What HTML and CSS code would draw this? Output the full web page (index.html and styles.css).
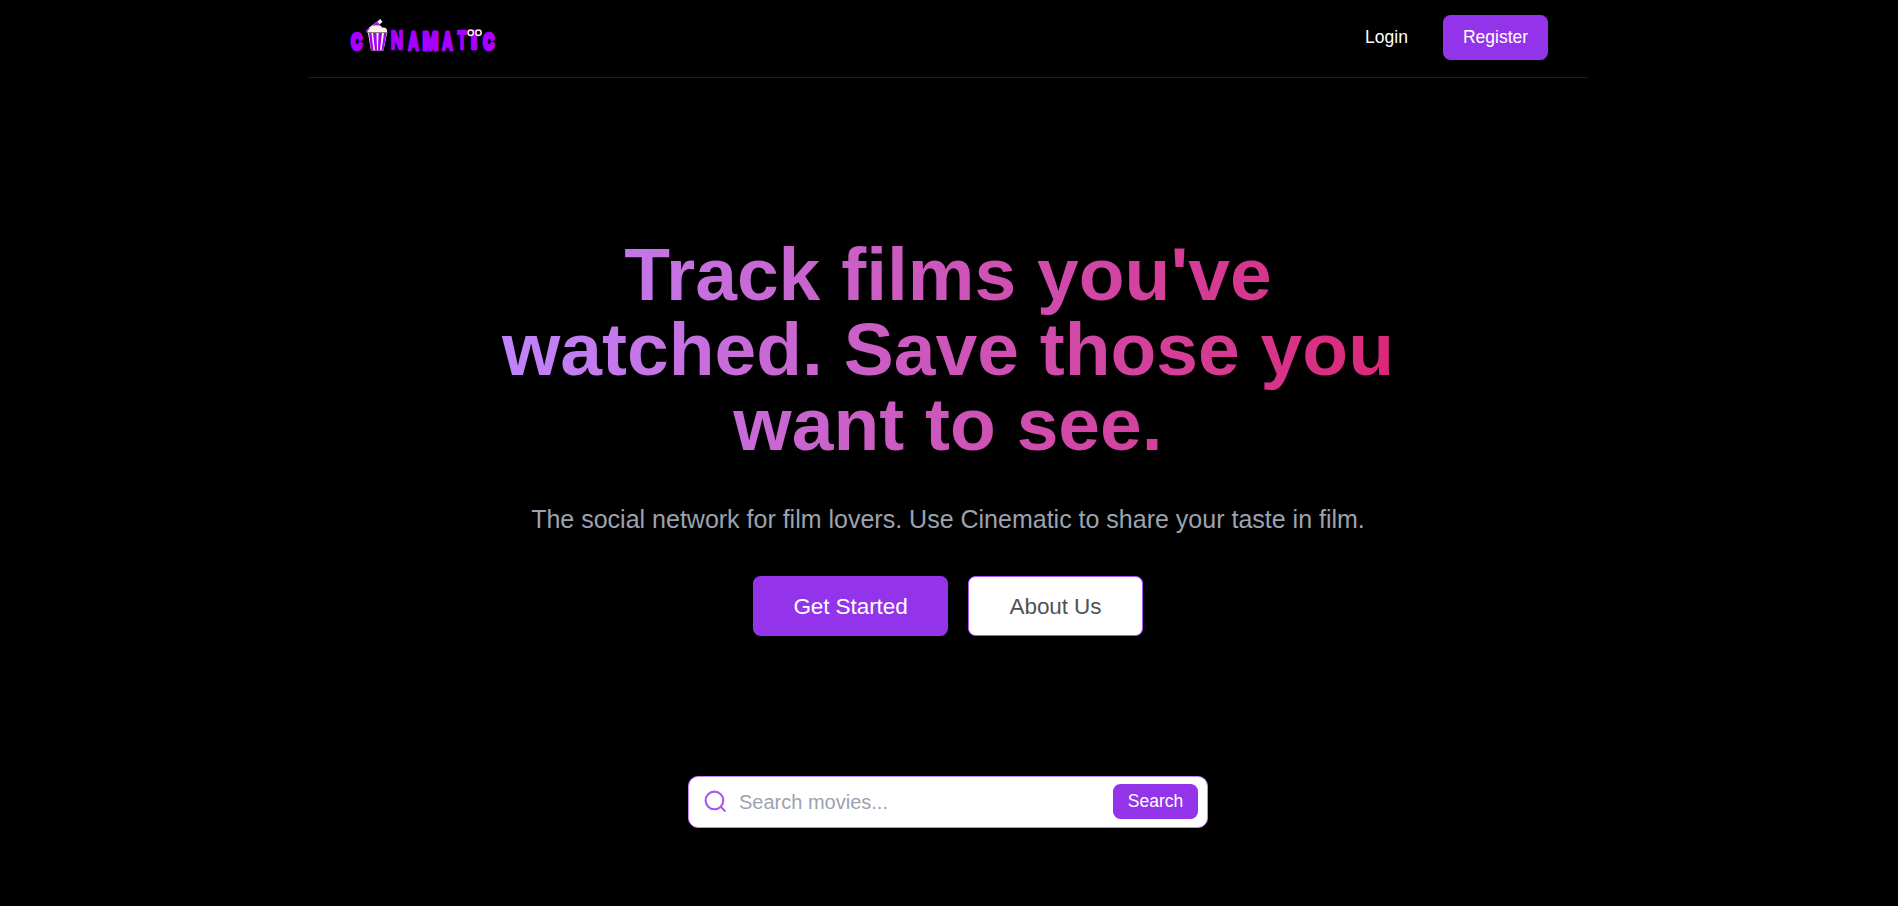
FILE: index.html
```html
<!DOCTYPE html>
<html lang="en">
<head>
<meta charset="utf-8">
<title>Cinamatic</title>
<link rel="stylesheet" href="styles.css">
</head>
<body>
<header class="header">
  <a class="logo" href="#">
    <svg width="150" height="36" viewBox="0 0 150 36">
      <g class="logo-text">
        <text class="heavy" x="3.500" y="30.500" textLength="10.500" lengthAdjust="spacingAndGlyphs">C</text>
        <text x="42.700" y="31" textLength="12.500" lengthAdjust="spacingAndGlyphs">N</text>
        <text class="round" x="60.200" y="31.500" textLength="10.500" lengthAdjust="spacingAndGlyphs">A</text>
        <text class="round" x="74.500" y="31.500" textLength="16" lengthAdjust="spacingAndGlyphs">M</text>
        <text class="round" x="94.200" y="31.500" textLength="10.500" lengthAdjust="spacingAndGlyphs">A</text>
        <text x="109.500" y="31" textLength="9" lengthAdjust="spacingAndGlyphs">T</text>
        <text x="122.500" y="31" textLength="7" lengthAdjust="spacingAndGlyphs">I</text>
        <text class="heavy" x="135.500" y="30.500" textLength="10.500" lengthAdjust="spacingAndGlyphs">C</text>
      </g>
      <path d="M21 12 33.500 2.500" stroke="#fff0f0" stroke-width="3.500"/>
      <path d="M18.500 14 22 11M26 8.500 30.500 5" stroke="#9b1cf0" stroke-width="3.500"/>
      <path d="M19.500 14q1-4 5-3.500 1-4 4.500-3 4-1 5 2 5.500-.5 5 4v1H19.500z" fill="#fff0e8"/>
      <path d="M20 15H39L35.500 32.500H23z" fill="#fff0f5"/>
      <path d="M21 15h2.500l2 17.500h-2.500zM25 15h3.500l.5 17.500h-2zM30.500 15h3.500l-2 17.500h-2zM36 15h2.500L35.500 32.500h-2z" fill="#a500f5"/>
      <path d="M19.500 14.500h20" stroke="#8f7f83"/>
      <g fill="#111" stroke="#fff0df" stroke-width="1.500"><circle cx="122.700" cy="14.700" r="2.700"/><circle cx="130.500" cy="14.700" r="2.700"/></g>
    </svg>
  </a>
  <nav class="nav">
    <a class="login" href="#">Login</a>
    <a class="btn register" href="#">Register</a>
  </nav>
</header>
<main class="main">
  <h1 class="title">Track films you've watched. Save those you want to see.</h1>
  <p class="subtitle">The social network for film lovers. Use Cinematic to share your taste in film.</p>
  <div class="actions">
    <a class="btn started" href="#">Get Started</a>
    <a class="btn about" href="#">About Us</a>
  </div>
  <form class="search">
    <svg class="search-icon" width="25" height="25" viewBox="0 0 24 24" fill="none" stroke="#a855f7" stroke-width="2" stroke-linecap="round" stroke-linejoin="round"><circle cx="11" cy="11" r="8.500"/><path d="m21 21-3.800-3.800"/></svg>
    <input class="search-input" type="text" placeholder="Search movies...">
    <button class="btn search-btn" type="button">Search</button>
  </form>
</main>
</body>
</html>
```
FILE: styles.css
```css
* { box-sizing: border-box; }
body {
  margin: 0;
  height: 906px;
  overflow: hidden;
  background: #000;
  color: #fff;
  font-family: "Liberation Sans", Arial, sans-serif;
}
a { color: inherit; text-decoration: none; }
.header {
  width: 1280px;
  height: 78px;
  margin-left: 308px;
  padding: 15px 40px 17px;
  display: flex;
  justify-content: space-between;
  border-bottom: 1px solid #1c1c1c;
}
.logo { display: flex; align-items: flex-start; }
.logo svg { margin-top: 3px; overflow: visible; }
.logo-text {
  font: bold 25px "Liberation Sans", sans-serif;
  fill: #a800ff;
  stroke: #a800ff;
  stroke-width: 2.400px;
  stroke-linejoin: round;
}
.heavy { font-size: 21.500px; stroke-width: 4.600px; }
.round { stroke-width: 3.200px; }
.nav { display: flex; align-items: center; gap: 35px; font-size: 17.500px; }
.login { letter-spacing: 0.050px; }
.btn {
  display: flex;
  align-items: center;
  justify-content: center;
  border-radius: 7.500px;
  background: #9333ea;
  color: #fff;
}
.register { width: 105px; height: 45px; }
.main {
  width: 1280px;
  margin-left: 308px;
  display: flex;
  flex-direction: column;
  align-items: center;
}
.title {
  width: 900px;
  margin: 159px 0 0;
  font-size: 75px;
  line-height: 75px;
  font-weight: 700;
  text-align: center;
  background: linear-gradient(to right, #c084fc, #db2777);
  -webkit-background-clip: text;
  background-clip: text;
  color: transparent;
}
.subtitle { margin: 40px 0 0; font-size: 25px; line-height: 35px; color: #9ca3af; }
.actions { display: flex; gap: 20px; margin-top: 39px; }
.started, .about { height: 60px; padding-top: 1px; font-size: 22.500px; letter-spacing: -0.080px; }
.started { width: 195px; }
.about { width: 175px; background: #fff; color: #525252; border: 1px solid #a855f7; }
.search {
  width: 520px;
  height: 52px;
  margin-top: 140px;
  padding: 0 9px 0 14px;
  display: flex;
  align-items: center;
  background: #fff;
  border: 1px solid #c084fc;
  border-radius: 10px;
}
.search-icon { margin-bottom: 1px; }
.search-input {
  flex: 1;
  min-width: 0;
  margin-left: 11px;
  padding: 0;
  border: 0;
  outline: 0;
  background: none;
  font: 20px "Liberation Sans", Arial, sans-serif;
  letter-spacing: 0;
}
.search-input::placeholder { color: #9ca3af; }
.search-btn {
  width: 85px;
  height: 35px;
  margin-bottom: 2px;
  padding: 0;
  border: 0;
  font: 17.500px "Liberation Sans", Arial, sans-serif;
}
```
